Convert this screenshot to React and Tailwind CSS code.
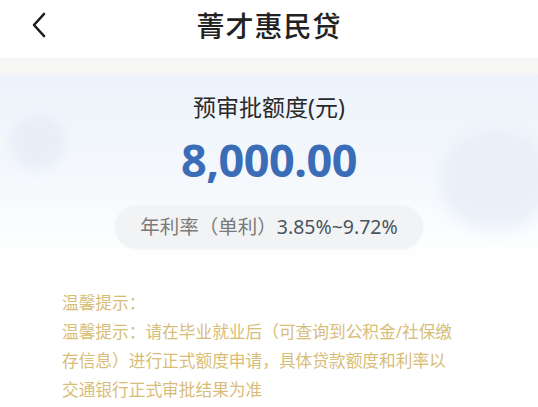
import React from "react";

const FONT = { fontFamily: '"Noto Sans", "Noto Sans CJK SC", sans-serif' };

const tips = [
  "温馨提示：",
  "温馨提示：请在毕业就业后（可查询到公积金/社保缴",
  "存信息）进行正式额度申请，具体贷款额度和利率以",
  "交通银行正式审批结果为准",
];

const App = () => {
  return (
    <div className="w-[538px] h-[407px] bg-white overflow-hidden" style={FONT}>
      {/* header */}
      <div className="relative h-[58px] flex items-center justify-center">
        <svg
          className="absolute left-[30px] top-[12px]"
          width="18"
          height="26"
          viewBox="0 0 18 26"
          fill="none"
        >
          <path d="M14 2 L4 13 L14 24" stroke="#1a1a1a" strokeWidth="2.6" strokeLinecap="round" strokeLinejoin="round" />
        </svg>
        <h1 className="text-[28px] font-medium text-[#222] tracking-[1px] leading-none -mt-[6px]">
          菁才惠民贷
        </h1>
      </div>

      <div className="h-[17px] bg-[#f6f6f5]" />

      {/* quota card */}
      <div className="relative h-[190px] bg-gradient-to-b from-[#edf3fb] via-[#f4f8fc] to-white overflow-hidden">
        <div className="absolute left-[10px] top-[40px] w-[55px] h-[55px] rounded-full bg-[#e3ebf7] blur-[6px] opacity-70" />
        <div className="absolute left-[440px] top-[55px] w-[110px] h-[100px] rounded-full bg-[#e4ecf7] blur-[8px] opacity-70" />
        <div className="relative flex flex-col items-center pt-[21px]">
          <div className="text-[23px] text-[#2a2a2a] leading-none">预审批额度(元)</div>
          <div className="mt-[18px] text-[45px] font-bold text-[#3b6cb7] leading-none tracking-[-0.5px]">
            8,000.00
          </div>
          <div className="mt-[23px] w-[308px] h-[44px] rounded-full bg-[#f2f3f4] flex items-center justify-center shadow-[0_1px_3px_rgba(0,0,0,0.03)]">
            <span className="text-[19.5px] text-[#7a7a7a]">年利率（单利）</span>
            <span className="text-[19.5px] text-[#4a5560]">3.85%~9.72%</span>
          </div>
        </div>
      </div>

      {/* tips */}
      <div className="pl-[62px] pt-[23px] text-[16.7px] leading-[29px] text-[#d8bd78]">
        {tips.map((t, i) => (
          <div key={i} className="whitespace-nowrap">
            {t}
          </div>
        ))}
      </div>
    </div>
  );
};

export default App;
